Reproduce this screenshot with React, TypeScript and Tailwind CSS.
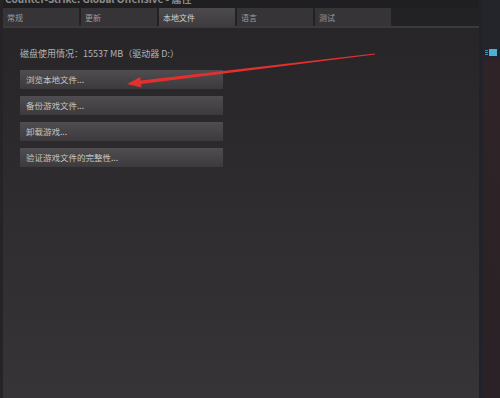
import React from "react";

const font = { fontFamily: '"Noto Sans CJK SC", "Noto Sans", sans-serif' };

const tabs = ["常规", "更新", "本地文件", "语言", "测试"];
const buttons = ["浏览本地文件...", "备份游戏文件...", "卸载游戏...", "验证游戏文件的完整性..."];

export default function App() {
  return (
    <div className="flex h-[398px] w-[500px] overflow-hidden bg-[#29272a]" style={font}>
      <div className="relative flex w-[479px] flex-col border-l-[3px] border-[#252326]">
        {/* title bar */}
        <div className="h-[8px] overflow-hidden bg-[#1f1e20]">
          <div className="-mt-[7px] pl-[2px] text-[10px] leading-[12px] font-bold text-[#8e8e8e]">
            Counter-Strike: Global Offensive - 属性
          </div>
        </div>
        {/* tabs */}
        <div className="flex h-[18px] gap-[2px] bg-[#222123]">
          {tabs.map((t, i) => (
            <div
              key={t}
              className={
                "flex h-[18px] w-[76px] items-center pl-[4px] pt-[1px] text-[8px] " +
                (i === 2
                  ? "bg-gradient-to-b from-[#4c4a4d] to-[#3e3c3f] text-[#d0d0d0]"
                  : "bg-[#363437] text-[#9c9c9c]")
              }
            >
              {t}
            </div>
          ))}
        </div>
        <div className="h-[2px] bg-[#3b393c]" />
        {/* content */}
        <div className="flex flex-1 flex-col bg-gradient-to-b from-[#272528] to-[#363437] pl-[17px] pt-[20px]">
          <div className="text-[9px] leading-[12px] text-[#b4b4b4]">磁盘使用情况：15537 MB（驱动器 D:）</div>
          <div className="mt-[10px] flex flex-col gap-[7px]">
            {buttons.map((b) => (
              <div
                key={b}
                className="flex h-[19px] w-[203px] items-center bg-gradient-to-b from-[#4f4d50] to-[#3c3a3d] pl-[6px] text-[8.5px] text-[#c4c4c4]"
              >
                {b}
              </div>
            ))}
          </div>
        </div>
        {/* annotation arrow */}
        <svg className="pointer-events-none absolute left-[-3px] top-0" width="479" height="398" viewBox="0 0 479 398">
          <polygon
            points="127,84 141.5,87.5 141.1,84.1 375,54.4 374.8,53.6 140.7,80.5 140.3,77.1"
            fill="#e2302f"
          />
        </svg>
      </div>
      {/* right strip */}
      <div className="flex w-[21px]">
        <div className="w-[4px] bg-[#202329]" />
        <div className="flex flex-1 flex-col">
          <div className="flex h-[60px] flex-col items-start bg-[#23252b] pl-[2px]">
            <div className="mt-[49px] flex items-center gap-[1px]">
              <div className="flex flex-col gap-[1px]">
                <div className="h-[1px] w-[3px] bg-[#3e90b5]" />
                <div className="h-[1px] w-[3px] bg-[#3e90b5]" />
                <div className="h-[1px] w-[3px] bg-[#3e90b5]" />
              </div>
              <div className="h-[7px] w-[8px] bg-[#4fb0d6]" />
            </div>
          </div>
          <div className="flex-1 bg-gradient-to-b from-[#2f2327] to-[#2a2226]" />
        </div>
      </div>
    </div>
  );
}
